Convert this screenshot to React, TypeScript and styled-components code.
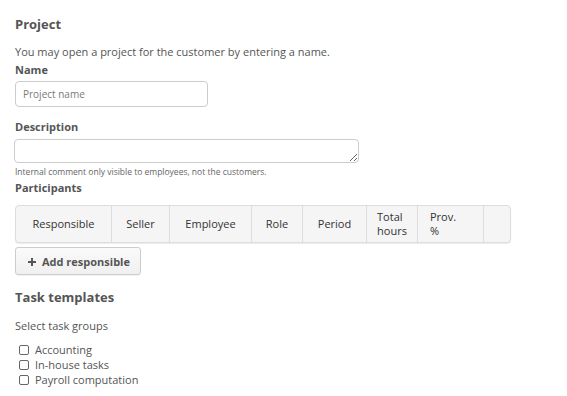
import React from "react";
import styled, { createGlobalStyle } from "styled-components";

const Global = createGlobalStyle`
  html, body { margin: 0; padding: 0; background: #fff; }
  body { font-family: "Open Sans", "Liberation Sans", sans-serif; color: #555; }
  * { box-sizing: border-box; }
`;

const Page = styled.div`
  padding: 15px 15px 0 15px;
  display: flex;
  flex-direction: column;
  width: 567px;
`;

const Heading = styled.h2<{ $mt?: number }>`
  margin: ${(p) => p.$mt ?? 0}px 0 0 0;
  font-size: 13px;
  font-weight: 700;
  color: #555;
  line-height: 18px;
`;

const Paragraph = styled.p<{ $mt?: number }>`
  margin: ${(p) => p.$mt ?? 0}px 0 0 0;
  font-size: 11px;
  line-height: 16px;
  color: #555;
`;

const Label = styled.label<{ $mt?: number }>`
  display: block;
  margin-top: ${(p) => p.$mt ?? 0}px;
  font-size: 11px;
  font-weight: 700;
  line-height: 16px;
  color: #555;
`;

const TextInput = styled.input`
  margin-top: 3px;
  width: 193px;
  height: 26px;
  border: 1px solid #ccc;
  border-radius: 4px;
  padding: 0 7px;
  font-family: inherit;
  font-size: 10px;
  color: #555;
  &::placeholder { color: #7a7a7a; }
`;

const TextArea = styled.textarea`
  margin: 4px 0 0 -1px;
  width: 345px;
  height: 24px;
  border: 1px solid #ccc;
  border-radius: 4px;
  font-family: inherit;
  font-size: 10px;
  display: block;
`;

const Help = styled.div`
  margin-top: 2px;
  font-size: 8.5px;
  line-height: 14px;
  color: #666;
`;

const Table = styled.div`
  margin-top: 9px;
  width: 496px;
  height: 38px;
  display: flex;
  border: 1px solid #ddd;
  border-radius: 4px;
  background: #f5f5f5;
  box-shadow: 0 1px 1px rgba(0,0,0,0.08);
  overflow: hidden;
`;

const HeadCell = styled.div<{ $w: number; $left?: boolean }>`
  width: ${(p) => p.$w}px;
  flex: 0 0 ${(p) => p.$w}px;
  display: flex;
  align-items: center;
  justify-content: ${(p) => (p.$left ? "flex-start" : "center")};
  padding: 0 ${(p) => (p.$left ? 12 : 0)}px;
  border-right: 1px solid #ddd;
  font-size: 11px;
  line-height: 14px;
  color: #333;
  &:last-child { border-right: none; flex: 1 1 auto; }
`;

const Button = styled.button`
  margin-top: 4px;
  width: 126px;
  height: 28px;
  display: flex;
  align-items: center;
  gap: 6px;
  padding: 1px 0 0 12px;
  white-space: nowrap;
  border: 1px solid #ccc;
  border-radius: 3px;
  background: linear-gradient(#fafafa, #f0f0f0);
  font-family: inherit;
  font-size: 11px;
  font-weight: 700;
  color: #555;
  box-shadow: 0 1px 1px rgba(0,0,0,0.06);
`;

const CheckList = styled.div`
  margin-top: 8px;
  display: flex;
  flex-direction: column;
`;

const CheckRow = styled.label`
  display: flex;
  align-items: center;
  gap: 6px;
  height: 15px;
  padding-left: 4px;
  font-size: 11px;
  color: #555;
`;

const Box = styled.span`
  width: 10px;
  height: 10px;
  border: 1px solid #666;
  border-radius: 2px;
  background: #fff;
`;

const cols: { label: React.ReactNode; w: number; left?: boolean }[] = [
  { label: "Responsible", w: 96 },
  { label: "Seller", w: 58 },
  { label: "Employee", w: 82 },
  { label: "Role", w: 51 },
  { label: "Period", w: 64 },
  { label: <>Total<br />hours</>, w: 51 },
  { label: <>Prov.<br />%</>, w: 66, left: true },
  { label: "", w: 28 },
];

export default function App() {
  return (
    <>
      <Global />
      <Page>
        <Heading>Project</Heading>
        <Paragraph $mt={11}>You may open a project for the customer by entering a name.</Paragraph>
        <Label $mt={2}>Name</Label>
        <TextInput placeholder="Project name" />
        <Label $mt={12}>Description</Label>
        <TextArea />
        <Help>Internal comment only visible to employees, not the customers.</Help>
        <Label $mt={1}>Participants</Label>
        <Table>
          {cols.map((c, i) => (
            <HeadCell key={i} $w={c.w} $left={c.left}>{c.label}</HeadCell>
          ))}
        </Table>
        <Button>
          <svg width="8" height="8" viewBox="0 0 8 8"><path d="M3 0h2v3h3v2H5v3H3V5H0V3h3z" fill="#555" /></svg>
          Add responsible
        </Button>
        <Heading $mt={13}>Task templates</Heading>
        <Paragraph $mt={12}>Select task groups</Paragraph>
        <CheckList>
          <CheckRow><Box />Accounting</CheckRow>
          <CheckRow><Box />In-house tasks</CheckRow>
          <CheckRow><Box />Payroll computation</CheckRow>
        </CheckList>
      </Page>
    </>
  );
}
